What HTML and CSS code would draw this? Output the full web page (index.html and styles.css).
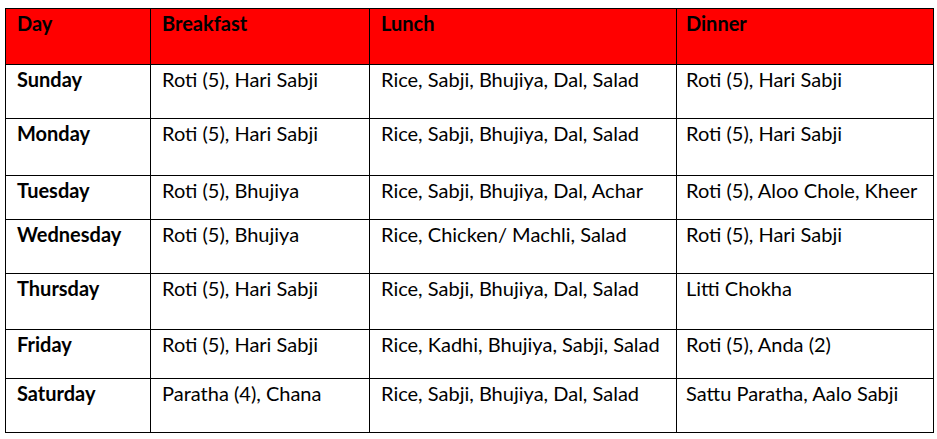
FILE: index.html
```html
<!DOCTYPE html>
<html>
<head>
<meta charset="utf-8">
<link rel="stylesheet" href="styles.css">
</head>
<body>
<table class="menu">
  <colgroup>
    <col class="c-day"><col class="c-bf"><col class="c-lunch"><col class="c-dinner">
  </colgroup>
  <thead>
    <tr class="head"><th>Day</th><th>Breakfast</th><th>Lunch</th><th class="dn">Dinner</th></tr>
  </thead>
  <tbody>
    <tr class="r-sun"><th>Sunday</th><td>Roti (5), Hari Sabji</td><td>Rice, Sabji, Bhujiya, Dal, Salad</td><td class="dn">Roti (5), Hari Sabji</td></tr>
    <tr class="r-mon"><th>Monday</th><td>Roti (5), Hari Sabji</td><td>Rice, Sabji, Bhujiya, Dal, Salad</td><td class="dn">Roti (5), Hari Sabji</td></tr>
    <tr class="r-tue"><th>Tuesday</th><td>Roti (5), Bhujiya</td><td>Rice, Sabji, Bhujiya, Dal, Achar</td><td class="dn">Roti (5), Aloo Chole, Kheer</td></tr>
    <tr class="r-wed"><th>Wednesday</th><td>Roti (5), Bhujiya</td><td>Rice, Chicken/ Machli, Salad</td><td class="dn">Roti (5), Hari Sabji</td></tr>
    <tr class="r-thu"><th>Thursday</th><td>Roti (5), Hari Sabji</td><td>Rice, Sabji, Bhujiya, Dal, Salad</td><td class="dn">Litti Chokha</td></tr>
    <tr class="r-fri"><th>Friday</th><td>Roti (5), Hari Sabji</td><td>Rice, Kadhi, Bhujiya, Sabji, Salad</td><td class="dn">Roti (5), Anda (2)</td></tr>
    <tr class="r-sat"><th>Saturday</th><td>Paratha (4), Chana</td><td>Rice, Sabji, Bhujiya, Dal, Salad</td><td class="dn">Sattu Paratha, Aalo Sabji</td></tr>
  </tbody>
</table>
</body>
</html>
```
FILE: styles.css
```css
html, body {
  background: #fff;
}
body {
  margin: 8px 0 0 5px;
  font-family: Lato, "Open Sans", sans-serif;
  color: #000;
}
.menu {
  border-collapse: collapse;
  table-layout: fixed;
  width: 928px;
}
.c-day { width: 145px; }
.c-bf { width: 219px; }
.c-lunch { width: 307px; }
.c-dinner { width: 257px; }
.menu th, .menu td {
  border: 1px solid #000;
  vertical-align: top;
  text-align: left;
  padding: 2px 0 0 11px;
  font-size: 20px;
  line-height: 24px;
  white-space: nowrap;
  box-sizing: border-box;
}
.menu .dn { padding-left: 9px; }
.menu th { font-weight: 700; }
.menu td { font-weight: 400; }
.head th { background: #ff0000; }
.head { height: 56px; }
.r-sun { height: 54px; }
.r-mon { height: 57px; }
.r-tue { height: 44px; }
.r-wed { height: 54px; }
.r-thu { height: 56px; }
.r-fri { height: 49px; }
.r-sat { height: 54px; }
```
